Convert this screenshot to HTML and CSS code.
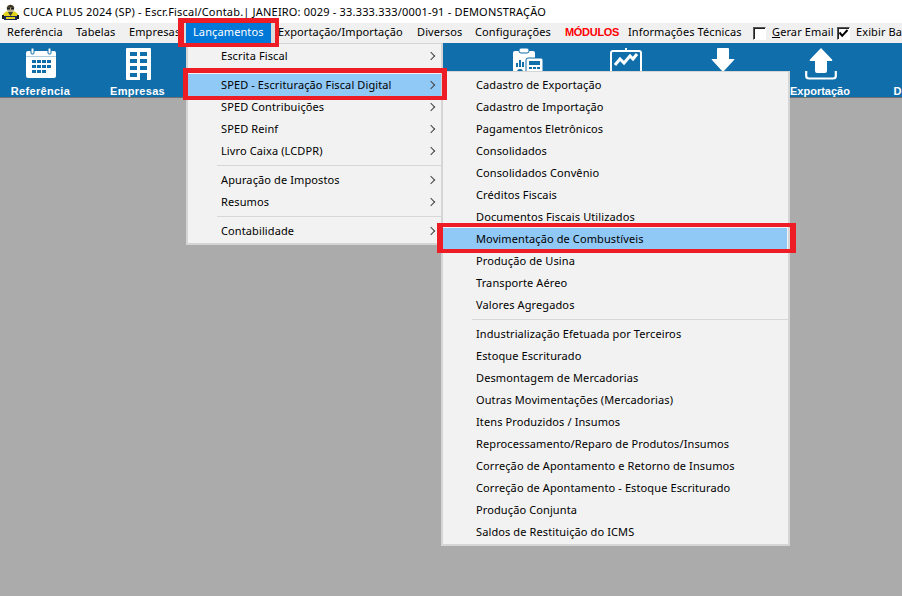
FILE: index.html
```html
<!DOCTYPE html>
<html lang="pt-BR">
<head>
<meta charset="utf-8">
<title>CUCA PLUS 2024</title>
<link rel="stylesheet" href="styles.css">
</head>
<body>
<div class="window">
  <header class="titlebar">
    <svg class="app-icon" width="17" height="16" viewBox="0 0 17 16">
      <path d="M1 14 V10 L4 7.500 H13 L16 10 V14Z" fill="#e3d21f"/>
      <path d="M6 8 H11 L8.500 12Z" fill="#2c3a2c"/>
      <circle cx="8.500" cy="4.500" r="3.800" fill="#b9ad8c"/>
      <path d="M4.500 3.500 Q8.500 -2 12.500 3.500 Z" fill="#3f3524"/>
      <rect x="5" y="3.500" width="3" height="2" fill="#1c1c1c"/><rect x="9" y="3.500" width="3" height="2" fill="#1c1c1c"/>
      <rect x="0" y="11" width="2" height="4" fill="#1c1c1c"/><rect x="15" y="11" width="2" height="4" fill="#1c1c1c"/>
      <rect x="2" y="12" width="13" height="4" fill="#1c2a55"/>
      <rect x="4" y="13" width="9" height="2" fill="#e3d21f"/>
    </svg>
    <span class="title-text">CUCA PLUS 2024 (SP) - Escr.Fiscal/Contab.| JANEIRO: 0029 - 33.333.333/0001-91 - DEMONSTRAÇÃO</span>
  </header>
  <nav class="menubar">
    <span class="mi m-ref">Referência</span>
    <span class="mi m-tab">Tabelas</span>
    <span class="mi m-emp">Empresas</span>
    <span class="m-lan-wrap"><span class="mi m-lan">Lançamentos</span></span>
    <span class="mi m-exp">Exportação/Importação</span>
    <span class="mi m-div">Diversos</span>
    <span class="mi m-cfg">Configurações</span>
    <span class="mi m-mod">MÓDULOS</span>
    <span class="mi m-inf">Informações Técnicas</span>
    <span class="check c1"></span>
    <span class="mi m-gerar"><u>G</u>erar Email</span>
    <span class="check c2"><svg width="11" height="11" viewBox="0 0 11 11"><path d="M1.500 4.500 L4.200 7.800 L9.500 2" fill="none" stroke="#000" stroke-width="2"/></svg></span>
    <span class="mi m-exibir">Exibir Barra</span>
  </nav>
  <div class="toolbar">
    <div class="tool t1">
      <svg width="30" height="30" viewBox="0 0 30 30"><rect x="0" y="3" width="30" height="27" rx="2" fill="#fff"/><rect x="0" y="8" width="30" height="1" fill="#106eab" opacity=".35"/><rect x="5" y="0" width="3" height="6" rx="1" fill="#fff" stroke="#106eab"/><rect x="22" y="0" width="3" height="6" rx="1" fill="#fff" stroke="#106eab"/><g fill="#106eab"><rect x="6" y="12" width="4" height="3"/><rect x="11" y="12" width="4" height="3"/><rect x="16" y="12" width="4" height="3"/><rect x="21" y="12" width="4" height="3"/><rect x="6" y="17" width="4" height="3"/><rect x="11" y="17" width="4" height="3"/><rect x="16" y="17" width="4" height="3"/><rect x="21" y="17" width="4" height="3"/><rect x="6" y="22" width="4" height="3"/><rect x="11" y="22" width="4" height="3"/><rect x="16" y="22" width="4" height="3"/></g></svg>
      <span>Referência</span>
    </div>
    <div class="tool t2">
      <svg width="25" height="32" viewBox="0 0 25 32"><rect width="25" height="32" rx="1" fill="#fff"/><g fill="#106eab"><rect x="4" y="4" width="7" height="4"/><rect x="14" y="4" width="7" height="4"/><rect x="4" y="11" width="7" height="4"/><rect x="14" y="11" width="7" height="4"/><rect x="4" y="18" width="7" height="4"/><rect x="14" y="18" width="7" height="4"/><rect x="4" y="25" width="7" height="4"/><rect x="14" y="25" width="7" height="7"/></g></svg>
      <span>Empresas</span>
    </div>
    <div class="tool t3">
      <svg width="30" height="26" viewBox="0 0 30 26"><rect x="0" y="3" width="22" height="23" rx="2" fill="#fff"/><rect x="6" y="0" width="10" height="5" rx="2" fill="#fff" stroke="#106eab"/><rect x="3" y="15" width="2" height="4" fill="#106eab"/><rect x="6" y="12" width="2" height="7" fill="#106eab"/><rect x="9" y="14" width="2" height="5" fill="#106eab"/><circle cx="7" cy="24" r="3" fill="#106eab"/><rect x="13" y="10" width="17" height="16" rx="2" fill="#fff" stroke="#106eab"/><rect x="16" y="13" width="11" height="4" fill="#106eab"/><rect x="16" y="19" width="3" height="2" fill="#106eab"/><rect x="20" y="19" width="3" height="2" fill="#106eab"/><rect x="24" y="19" width="3" height="2" fill="#106eab"/><rect x="16" y="23" width="11" height="2" fill="#106eab"/></svg>
    </div>
    <div class="tool t4">
      <svg width="32" height="26" viewBox="0 0 32 26"><path d="M15 0h2v3h-2z" fill="#fff"/><rect x="1" y="3" width="30" height="23" rx="2" fill="none" stroke="#fff" stroke-width="2"/><path d="M5 17 L10 11 L14 15 L20 8 L23 11 L27 6" fill="none" stroke="#fff" stroke-width="3"/></svg>
    </div>
    <div class="tool t5">
      <svg width="24" height="26" viewBox="0 0 24 26"><path d="M6 1 Q6 0 7 0 H17 Q18 0 18 1 V11 H23 Q24 11 23 12 L12 24 L1 12 Q0 11 1 11 H6 Z" fill="#fff"/></svg>
    </div>
    <div class="tool t6">
      <svg width="32" height="32" viewBox="0 0 32 32"><path d="M16 0 L27 11.500 Q28 13 26 13 H22 V23 Q22 25 20 25 H12 Q10 25 10 23 V13 H6 Q4 13 5 11.500 Z" fill="#fff"/><path d="M1.200 23 V28 Q1.200 30.500 4 30.500 H28 Q30.800 30.500 30.800 28 V23" fill="none" stroke="#fff" stroke-width="2.200"/></svg>
      <span>Exportação</span>
    </div>
    <div class="tool t7"><span>Diversos</span></div>
  </div>
  <div class="workspace"></div>

  <div class="menu menu-main">
    <div class="item">Escrita Fiscal<i class="arrow"></i></div>
    <div class="sep"></div>
    <div class="item hl">SPED - Escrituração Fiscal Digital<i class="arrow"></i></div>
    <div class="item">SPED Contribuições<i class="arrow"></i></div>
    <div class="item">SPED Reinf<i class="arrow"></i></div>
    <div class="item">Livro Caixa (LCDPR)<i class="arrow"></i></div>
    <div class="sep"></div>
    <div class="item">Apuração de Impostos<i class="arrow"></i></div>
    <div class="item">Resumos<i class="arrow"></i></div>
    <div class="sep"></div>
    <div class="item">Contabilidade<i class="arrow"></i></div>
  </div>

  <div class="menu menu-sub">
    <div class="item">Cadastro de Exportação</div>
    <div class="item">Cadastro de Importação</div>
    <div class="item">Pagamentos Eletrônicos</div>
    <div class="item">Consolidados</div>
    <div class="item">Consolidados Convênio</div>
    <div class="item">Créditos Fiscais</div>
    <div class="item">Documentos Fiscais Utilizados</div>
    <div class="item hl">Movimentação de Combustíveis</div>
    <div class="item">Produção de Usina</div>
    <div class="item">Transporte Aéreo</div>
    <div class="item">Valores Agregados</div>
    <div class="sep"></div>
    <div class="item">Industrialização Efetuada por Terceiros</div>
    <div class="item">Estoque Escriturado</div>
    <div class="item">Desmontagem de Mercadorias</div>
    <div class="item">Outras Movimentações (Mercadorias)</div>
    <div class="item">Itens Produzidos / Insumos</div>
    <div class="item">Reprocessamento/Reparo de Produtos/Insumos</div>
    <div class="item">Correção de Apontamento e Retorno de Insumos</div>
    <div class="item">Correção de Apontamento - Estoque Escriturado</div>
    <div class="item">Produção Conjunta</div>
    <div class="item">Saldos de Restituição do ICMS</div>
  </div>

  <div class="redbox rb-lan"></div>
  <div class="redbox rb-sped"></div>
  <div class="redbox rb-mov"></div>
</div>
</body>
</html>
```
FILE: styles.css
```css
* { box-sizing: border-box; }
html, body { margin: 0; padding: 0; }
body { width: 902px; height: 596px; overflow: hidden; font-family: "Noto Sans", "DejaVu Sans", sans-serif; font-size: 11px; color: #000; }
.window { position: relative; width: 902px; height: 596px; display: flex; flex-direction: column; background: #ababab; overflow: hidden; }
.titlebar { height: 23px; background: #fff; display: flex; align-items: center; padding-left: 2px; gap: 4px; flex: none; white-space: nowrap; }
.app-icon { flex: none; }
.title-text { font-size: 11px; letter-spacing: .19px; padding-bottom: 1px; }
.menubar { height: 20px; background: #f0f0f0; display: flex; align-items: center; flex: none; white-space: nowrap; overflow: hidden; }
.mi { display: block; flex: none; letter-spacing: .11px; padding-bottom: 4px; }
.m-ref { margin-left: 7px; width: 69px; }
.m-tab { width: 53px; }
.m-emp { width: 55px; }
.m-lan-wrap { flex: none; width: 91px; height: 20px; padding: 0 4px 0 2px; background: #dcdcdc; }
.m-lan { width: 85px; height: 20px; line-height: 18px; padding: 0 0 0 7px; background: #0078d7; color: #fff; }
.m-exp { margin-left: 3px; width: 139px; }
.m-div { width: 58px; }
.m-cfg { width: 90px; }
.m-mod { width: 63px; color: #f00; font-weight: 700; font-family: "Liberation Sans", sans-serif; letter-spacing: -.3px; padding-bottom: 2px; }
.m-inf { width: 125px; }
.m-gerar { width: 65px; margin-left: 6px; }
.m-exibir { margin-left: 6px; }
.check { width: 13px; height: 13px; background: #fff; border: 1px solid #fff; border-top-color: #555; border-left-color: #555; box-shadow: inset 1px 1px 0 #222; flex: none; display: flex; align-items: center; justify-content: center; }
.toolbar { height: 55px; background: #106eab; position: relative; flex: none; border-bottom: 1px solid #6f6f6f; }
.tool { position: absolute; top: 0; width: 100px; height: 54px; display: flex; flex-direction: column; align-items: center; color: #fff; font-family: "Liberation Sans", sans-serif; font-weight: 700; font-size: 11px; letter-spacing: .3px; }
.tool svg { margin-top: 5px; flex: none; }
.tool span { position: absolute; top: 42px; white-space: nowrap; }
.t1 { left: -9px; } .t2 { left: 88px; } .t3 { left: 478px; } .t4 { left: 576px; } .t5 { left: 673px; } .t6 { left: 771px; } .t7 { left: 868px; }
.t1 span { margin-left: -1px; }
.t2 span { margin-left: -1px; }
.t6 span { letter-spacing: 0; left: 19px; }
.workspace { flex: 1; background: #ababab; }
.menu { position: absolute; background: #f2f2f2; border: 2px solid #d5d5d5; border-width: 1px 2px 2px 2px; }
.menu-main { left: 186px; top: 43px; width: 257px; height: 202px; padding: 1px 0; }
.menu-sub { left: 441px; top: 71px; width: 349px; height: 475px; padding: 2px 0; }
.item { position: relative; height: 22px; line-height: 21px; padding-left: 33px; white-space: nowrap; letter-spacing: .11px; }
.menu-sub .item { line-height: 22px; }
.hl { background: #90c8f6; }
.menu-sub .hl { margin-right: 1px; }
.sep { height: 1px; background: #d7d7d7; margin: 3px 0 3px 29px; }
.arrow { position: absolute; right: 7px; top: 8px; width: 6px; height: 6px; border-top: 1px solid #444; border-right: 1px solid #444; transform: rotate(45deg); }
.redbox { position: absolute; border-style: solid; border-color: #ee1c25; }
.rb-lan { left: 178px; top: 18px; width: 101px; height: 29px; border-width: 5px 4px 4px 6px; }
.rb-sped { left: 183px; top: 68px; width: 264px; height: 32px; border-width: 5px 5px 4px 5px; }
.rb-mov { left: 437px; top: 223px; width: 359px; height: 30px; border-width: 4px 6px 4px 6px; }
```
